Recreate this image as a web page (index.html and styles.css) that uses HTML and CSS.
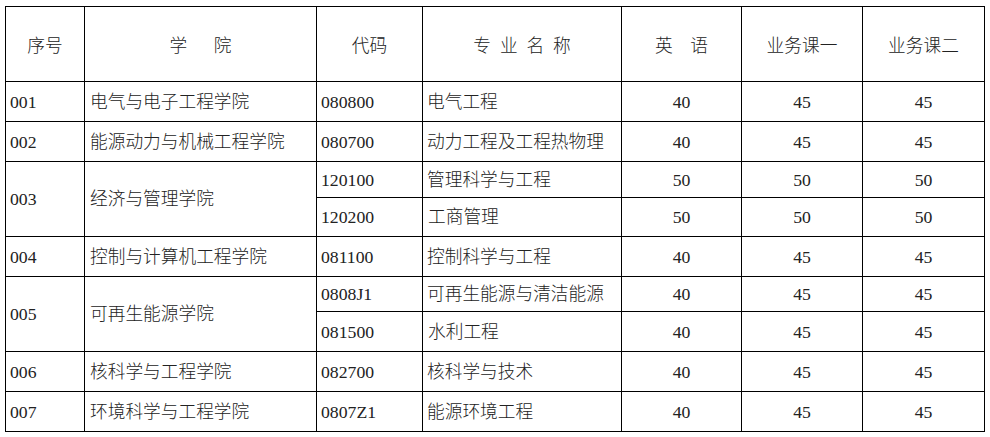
FILE: index.html
```html
<!DOCTYPE html>
<html lang="zh">
<head>
<meta charset="utf-8">
<link rel="stylesheet" href="styles.css">
</head>
<body>
<table class="grid">
  <colgroup>
    <col class="c1"><col class="c2"><col class="c3"><col class="c4"><col class="c5"><col class="c6"><col class="c7">
  </colgroup>
  <tr class="head">
    <th>序号</th>
    <th>学&ensp;&emsp;院</th>
    <th>代码</th>
    <th>专&ensp;业&ensp;名&ensp;称</th>
    <th>英&emsp;语</th>
    <th>业务课一</th>
    <th>业务课二</th>
  </tr>
  <tr class="h40">
    <td>001</td><td>电气与电子工程学院</td><td>080800</td><td>电气工程</td><td class="n">40</td><td class="n">45</td><td class="n">45</td>
  </tr>
  <tr class="h40">
    <td>002</td><td>能源动力与机械工程学院</td><td>080700</td><td>动力工程及工程热物理</td><td class="n">40</td><td class="n">45</td><td class="n">45</td>
  </tr>
  <tr class="h36">
    <td rowspan="2">003</td><td rowspan="2">经济与管理学院</td><td>120100</td><td>管理科学与工程</td><td class="n">50</td><td class="n">50</td><td class="n">50</td>
  </tr>
  <tr class="h39">
    <td>120200</td><td>工商管理</td><td class="n">50</td><td class="n">50</td><td class="n">50</td>
  </tr>
  <tr class="h40">
    <td>004</td><td>控制与计算机工程学院</td><td>081100</td><td>控制科学与工程</td><td class="n">40</td><td class="n">45</td><td class="n">45</td>
  </tr>
  <tr class="h35">
    <td rowspan="2">005</td><td rowspan="2">可再生能源学院</td><td>0808J1</td><td>可再生能源与清洁能源</td><td class="n">40</td><td class="n">45</td><td class="n">45</td>
  </tr>
  <tr class="h40">
    <td>081500</td><td>水利工程</td><td class="n">40</td><td class="n">45</td><td class="n">45</td>
  </tr>
  <tr class="h40">
    <td>006</td><td>核科学与工程学院</td><td>082700</td><td>核科学与技术</td><td class="n">40</td><td class="n">45</td><td class="n">45</td>
  </tr>
  <tr class="h40">
    <td>007</td><td>环境科学与工程学院</td><td>0807Z1</td><td>能源环境工程</td><td class="n">40</td><td class="n">45</td><td class="n">45</td>
  </tr>
</table>
</body>
</html>
```

FILE: styles.css
```css
html, body {
  background: #fff;
}
body {
  margin: 6px 0 0 5px;
  font-family: "Liberation Serif", "Noto Sans CJK SC", serif;
  font-size: 17.7px;
  color: #222;
}
.grid {
  border-collapse: collapse;
  table-layout: fixed;
  width: 980px;
}
.c1 { width: 79px; }
.c2 { width: 232px; }
.c3 { width: 106px; }
.c4 { width: 199px; }
.c5 { width: 120px; }
.c6 { width: 121px; }
.c7 { width: 122px; }
.grid th, .grid td {
  border: 1px solid #000;
  padding: 0 4px;
  line-height: 20px;
  vertical-align: middle;
  white-space: nowrap;
  text-align: left;
  font-weight: 300;
}
.grid td:nth-child(2) { padding-left: 5px; }
.grid th {
  text-align: center;
  font-family: "Noto Sans CJK SC", sans-serif;
}
.grid td.n { text-align: center; }
.head { height: 75px; }
.h40 { height: 40px; }
.h39 { height: 39px; }
.h36 { height: 36px; }
.h35 { height: 35px; }
```
